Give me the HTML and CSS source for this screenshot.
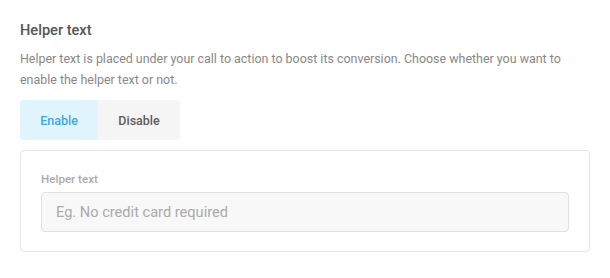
FILE: index.html
```html
<!DOCTYPE html>
<html>
<head>
<meta charset="utf-8">
<link rel="stylesheet" href="styles.css">
</head>
<body>
<section class="setting">
  <h2 class="setting-title">Helper text</h2>
  <p class="setting-desc">Helper text is placed under your call to action to boost its conversion. Choose whether you want to enable the helper text or not.</p>
  <div class="toggle">
    <button class="toggle-btn is-active">Enable</button>
    <button class="toggle-btn">Disable</button>
  </div>
  <div class="card">
    <label class="field-label" for="helper">Helper text</label>
    <input class="field-input" id="helper" type="text" placeholder="Eg. No credit card required">
  </div>
</section>
</body>
</html>
```
FILE: styles.css
```css
html, body {
  margin: 0;
  padding: 0;
  background: #ffffff;
}
body {
  font-family: Roboto, "Liberation Sans", sans-serif;
}
.setting {
  padding: 20px 20px 0 20px;
}
.setting-title {
  margin: 0;
  font-size: 14.6px;
  font-weight: 500;
  color: #555555;
  line-height: 20px;
}
.setting-desc {
  margin: 8px 0 10px 0;
  font-size: 12.45px;
  line-height: 21px;
  color: #888888;
}
.toggle {
  display: flex;
  width: 160px;
  border-radius: 4px;
  overflow: hidden;
}
.toggle-btn {
  border: 0;
  margin: 0;
  height: 40px;
  padding: 0;
  font-family: inherit;
  font-size: 12.5px;
  font-weight: 500;
  background: #f5f5f5;
  color: #5c5c5c;
  cursor: pointer;
}
.toggle-btn:first-child {
  width: 78px;
}
.toggle-btn:last-child {
  width: 82px;
}
.toggle-btn.is-active {
  background: #e1f5fe;
  color: #3ea6ea;
}
.card {
  margin-top: 10px;
  border: 1px solid #e6e6e6;
  border-radius: 4px;
  padding: 20px 20px 19px 20px;
  display: flex;
  flex-direction: column;
}
.field-label {
  font-size: 11.6px;
  font-weight: 500;
  color: #aaaaaa;
  line-height: 16px;
  margin-bottom: 5px;
}
.field-input {
  box-sizing: border-box;
  height: 40px;
  border: 1px solid #e0e0e0;
  border-radius: 4px;
  background: #f8f8f8;
  padding: 0 14px;
  font-family: inherit;
  font-size: 14.6px;
  color: #555555;
  outline: none;
}
.field-input::placeholder {
  color: #aaaaaa;
}
```
